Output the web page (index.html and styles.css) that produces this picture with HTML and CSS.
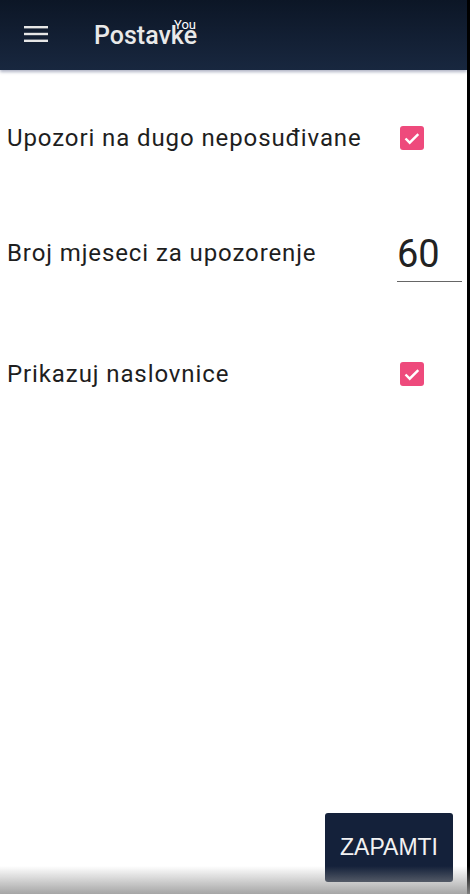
FILE: index.html
```html
<!DOCTYPE html>
<html lang="hr">
<head>
    <meta charset="UTF-8">
    <meta name="viewport" content="width=device-width, initial-scale=1.0">
    <title>Postavke</title>
    <link rel="stylesheet" href="styles.css">
</head>
<body>
    <div class="app">
        <header class="toolbar">
            <svg class="menu-icon" width="24" height="24" viewBox="0 0 24 24">
                <rect x="0" y="4" width="24" height="2.4" fill="#e6e6e6"/>
                <rect x="0" y="10.8" width="24" height="2.4" fill="#e6e6e6"/>
                <rect x="0" y="17.6" width="24" height="2.4" fill="#e6e6e6"/>
            </svg>
            <h1 class="title">Postavke<span class="tag">You</span></h1>
        </header>

        <main class="settings">
            <div class="row row-first">
                <span class="label">Upozori na dugo neposuđivane</span>
                <span class="check">
                    <svg width="24" height="24" viewBox="0 0 24 24"><path d="M5.5 12.5l4.2 4.2 8.6-8.6" fill="none" stroke="#fff" stroke-width="2.4"/></svg>
                </span>
            </div>
            <div class="row row-field">
                <span class="label">Broj mjeseci za upozorenje</span>
                <span class="field">60</span>
            </div>
            <div class="row row-last">
                <span class="label">Prikazuj naslovnice</span>
                <span class="check">
                    <svg width="24" height="24" viewBox="0 0 24 24"><path d="M5.5 12.5l4.2 4.2 8.6-8.6" fill="none" stroke="#fff" stroke-width="2.4"/></svg>
                </span>
            </div>
        </main>

        <div class="actions">
            <button class="save">ZAPAMTI</button>
        </div>
    </div>
    <div class="fade"></div>
</body>
</html>
```

FILE: styles.css
```css
html {
    background-color: #000;
}
body {
    margin: 0;
    width: 467px;
    height: 894px;
    background-color: #fff;
    font-family: Roboto, 'Noto Sans', sans-serif;
    color: #1e1e1e;
    overflow: hidden;
}
.app {
    display: flex;
    flex-direction: column;
    height: 100%;
}
.toolbar {
    height: 70px;
    display: flex;
    align-items: center;
    padding-left: 24px;
    background: linear-gradient(#0c1626, #18273f);
    box-shadow: 0 2px 3px rgba(30, 40, 90, 0.35);
    box-sizing: border-box;
}
.menu-icon {
    margin-top: -2px;
}
.title {
    position: relative;
    margin: 0 0 0 46px;
    font-size: 25px;
    font-weight: 500;
    color: #e9e9e9;
}
.tag {
    position: absolute;
    left: 80px;
    top: -4px;
    font-size: 13px;
    font-weight: 400;
    color: #fff;
}
.settings {
    flex: 1;
    display: flex;
    flex-direction: column;
    padding: 38px 0 0 7px;
}
.row {
    display: flex;
    align-items: center;
    justify-content: space-between;
    height: 60px;
}
.row-field {
    height: 70px;
    margin-top: 50px;
}
.row-last {
    margin-top: 56px;
}
.label {
    font-size: 24px;
    letter-spacing: 0.9px;
}
.check {
    width: 24px;
    height: 24px;
    margin-right: 43px;
    border-radius: 3px;
    background-color: #ee4a7c;
    display: flex;
}
.field {
    width: 65px;
    margin-right: 5px;
    padding: 4px 0 5px;
    font-size: 38px;
    line-height: 44px;
    color: #222;
    border-bottom: 1px solid #666;
    margin-top: 4px;
}
.actions {
    display: flex;
    justify-content: flex-end;
    padding: 0 14px 12px 0;
}
.save {
    width: 128px;
    height: 69px;
    border: none;
    border-radius: 3px;
    background-color: #14213a;
    color: #f2f2f2;
    font-family: 'Liberation Sans', Arial, sans-serif;
    font-size: 23px;
}
.fade {
    position: fixed;
    left: 0;
    right: 0;
    bottom: 0;
    height: 28px;
    background: linear-gradient(rgba(170, 170, 170, 0), rgba(150, 150, 150, 0.85));
    pointer-events: none;
}
```
